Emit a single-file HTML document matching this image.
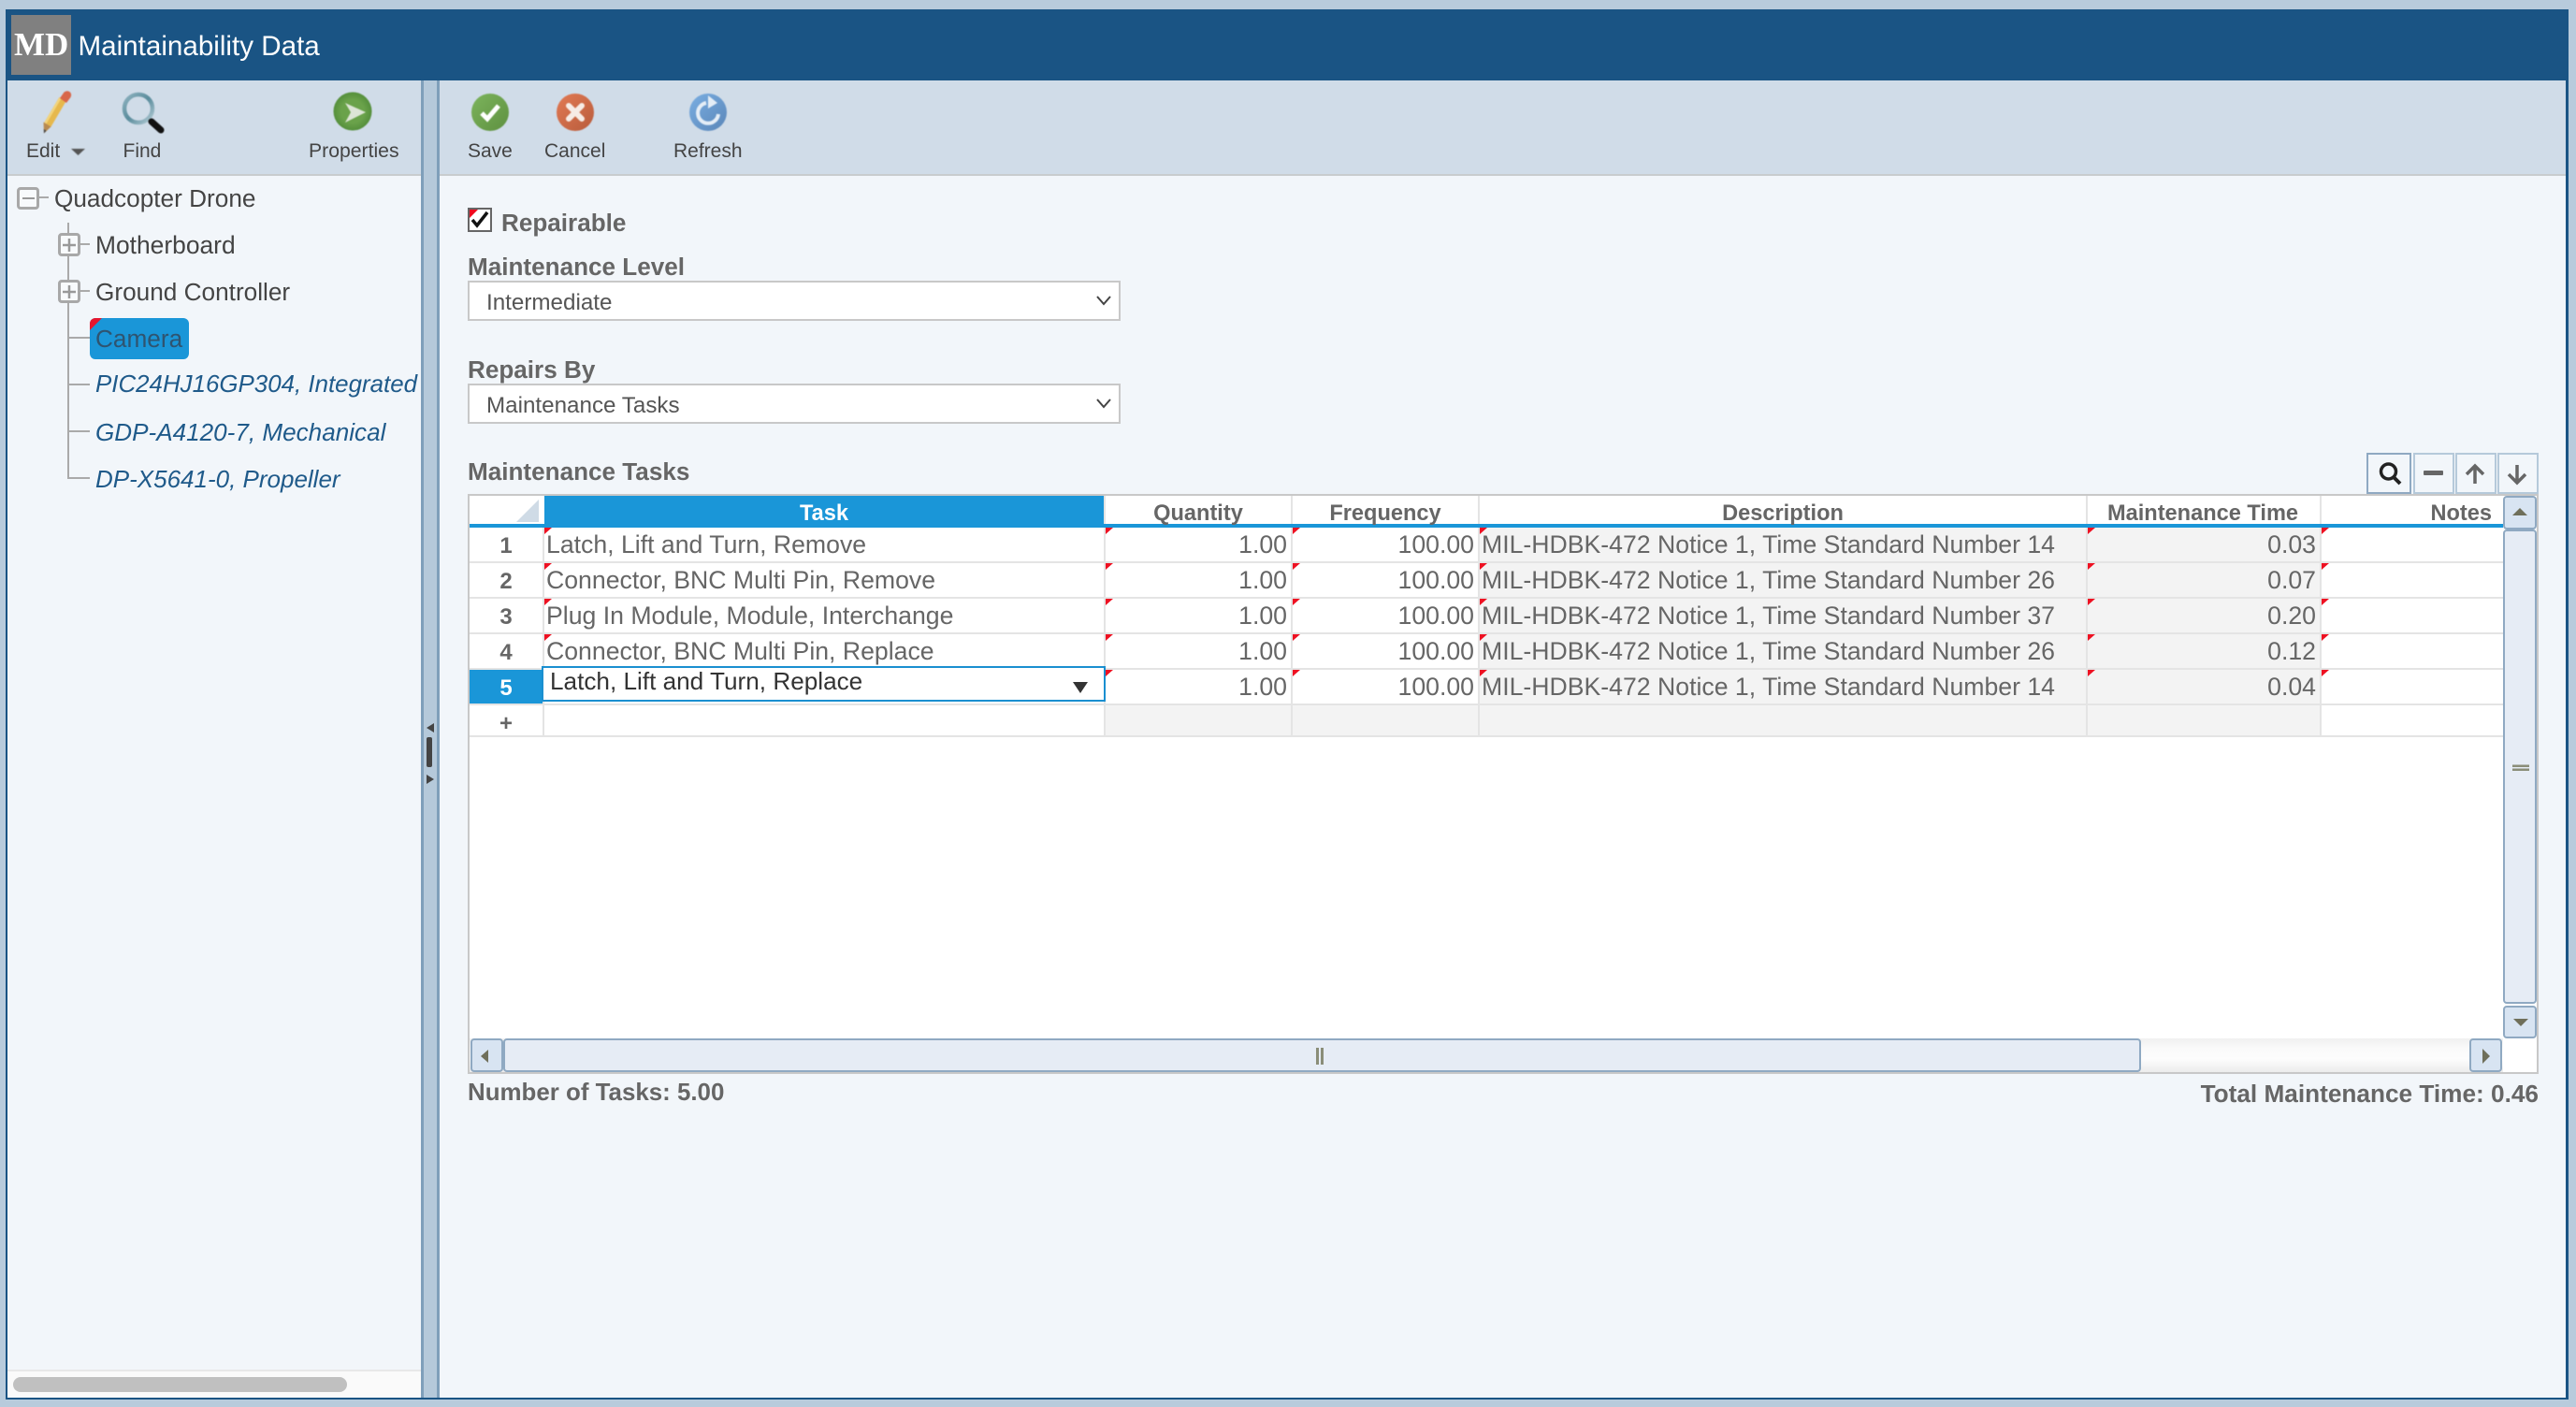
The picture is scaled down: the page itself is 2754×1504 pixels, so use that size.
<!DOCTYPE html>
<html>
<head>
<meta charset="utf-8">
<title>Maintainability Data</title>
<style>
html,body{margin:0;padding:0;background:#b8cbdc;}
#p{position:relative;width:2754px;height:1504px;overflow:hidden;background:#b8cbdc;font-family:"Liberation Sans",Arial,sans-serif;}
#p div,#p svg{position:absolute;}
.t{position:absolute;white-space:nowrap;line-height:1em;top:calc(var(--b)*1px - .8465em);}
.bar{font-size:21px;color:#444;}
.tree{font-size:26.2px;color:#444;}
.it{font-size:26px;font-style:italic;color:#1f5a8a;}
.lb{font-size:26.1px;font-weight:bold;color:#666;}
.sel{font-size:24.2px;color:#555;}
.h{font-size:23.6px;font-weight:bold;color:#666;transform:translateX(-50%);}
.c{font-size:26.65px;color:#666;}
.n{font-size:24px;font-weight:bold;color:#666;transform:translateX(-50%);}
.sb{background:#d8e4f2;border:2px solid #8fa9c2;border-radius:4px;box-sizing:border-box;}
.th{background:#e6ecf5;border:2px solid #8fa9c2;border-radius:4px;box-sizing:border-box;}
.ln{background:#e4e4e4;}
.tb{background:#f2f6fa;border:2px solid #b5c9da;box-sizing:border-box;}
.cl{background:#aaa;}
.bx{background:#f8fafc;border:3px solid #a8a8a8;border-radius:4px;box-sizing:border-box;}
.ic{filter:blur(.6px);}
</style>
</head>
<body>
<div id="p">
  <!-- shell -->
  <div style="left:6px;top:10px;width:2740px;height:1486px;background:#1a5484;"></div>
  <div style="left:8px;top:86px;width:442px;height:1408px;background:#f2f6fa;"></div>
  <div style="left:470px;top:86px;width:2273px;height:1408px;background:#f2f6fa;"></div>
  <div style="left:450px;top:86px;width:20px;height:1408px;background:#b5c9da;border-left:3px solid #7f9fba;border-right:3px solid #7f9fba;box-sizing:border-box;"></div>
  <div style="left:8px;top:86px;width:442px;height:100px;background:#d0dce8;"></div>
  <div style="left:8px;top:186px;width:442px;height:2px;background:#c8ccce;"></div>
  <div style="left:470px;top:86px;width:2273px;height:100px;background:#d0dce8;"></div>
  <div style="left:470px;top:186px;width:2273px;height:2px;background:#c8ccce;"></div>

  <!-- title -->
  <div style="left:12px;top:16px;width:64px;height:64px;background:#808080;"></div>
  <span class="t" style="left:15px;--b:60;font-family:'Liberation Serif',serif;font-weight:bold;font-size:35px;color:#fff;">MD</span>
  <span class="t" style="left:83.500px;--b:60;font-size:29.6px;color:#fff;">Maintainability Data</span>

  <!-- splitter handles -->
  <svg style="left:450px;top:770px;" width="20" height="70" viewBox="450 770 20 70">
    <path d="M464 773v10l-8-5z" fill="#444"/>
    <rect x="456" y="788" width="6" height="32" rx="2" fill="#444"/>
    <path d="M456 828v10l8-5z" fill="#444"/>
  </svg>

  <!-- left toolbar -->
  <svg class="ic" style="left:0;top:86px;" width="450" height="100" viewBox="0 86 450 100">
    <defs>
      <radialGradient id="gp" cx=".5" cy=".5" r=".55"><stop offset=".55" stop-color="#6aa24a"/><stop offset="1" stop-color="#4f8a38"/></radialGradient>
      <linearGradient id="gm" x1="0" y1="0" x2="1" y2="1"><stop offset="0" stop-color="#8fb3c0"/><stop offset=".5" stop-color="#5a8c9c"/><stop offset="1" stop-color="#b4ccd6"/></linearGradient>
    </defs>
    <path d="M50.500 134L67 106" stroke="#e6b84c" stroke-width="8.500" fill="none"/>
    <path d="M48 132.500L64.500 104.500" stroke="#f2d47c" stroke-width="2.500" fill="none"/>
    <path d="M46.500 130.500L54.500 135.500L47 142.500Z" fill="#b88a50"/>
    <path d="M46.800 138L49.500 139.800L47 142.500Z" fill="#444"/>
    <path d="M64 105L68.500 98.500Q72 96 75 98.500Q77 101 75.500 104L71 110Z" fill="#d8664a"/>
    <circle cx="148" cy="116" r="15" fill="none" stroke="url(#gm)" stroke-width="4.500"/>
    <path d="M162 130L172 139" stroke="#111" stroke-width="7" stroke-linecap="round"/>
    <circle cx="377" cy="119" r="20.500" fill="url(#gp)"/>
    <path d="M369 110L391 120L369 131L375 120Z" fill="#dde5d6"/>
    <path d="M76 159H91L83.500 166Z" fill="#555"/>
  </svg>
  <span class="t bar" style="left:28px;--b:169;">Edit</span>
  <span class="t bar" style="left:131.500px;--b:169;">Find</span>
  <span class="t bar" style="left:330px;--b:169;font-size:21.2px;">Properties</span>

  <!-- right toolbar -->
  <svg class="ic" style="left:470px;top:86px;" width="320" height="70" viewBox="470 86 320 70">
    <defs>
      <linearGradient id="gs" x1="0" y1="0" x2="1" y2="1"><stop offset="0" stop-color="#7cb45c"/><stop offset="1" stop-color="#5e9040"/></linearGradient>
      <linearGradient id="gc" x1="0" y1="0" x2="1" y2="1"><stop offset="0" stop-color="#e27a54"/><stop offset="1" stop-color="#b85c3c"/></linearGradient>
      <linearGradient id="gr" x1="0" y1="0" x2="1" y2="1"><stop offset="0" stop-color="#7aaee2"/><stop offset="1" stop-color="#5a86b8"/></linearGradient>
    </defs>
    <circle cx="524" cy="120" r="20" fill="url(#gs)"/>
    <path d="M515 121L521 127L533 113" fill="none" stroke="#fff" stroke-width="5"/>
    <circle cx="615" cy="120" r="20" fill="url(#gc)"/>
    <path d="M608 113L622 127M622 113L608 127" fill="none" stroke="#f6ece6" stroke-width="6" stroke-linecap="round"/>
    <circle cx="757" cy="120" r="20" fill="url(#gr)"/>
    <path d="M755 110A11 11 0 1 0 768 122" fill="none" stroke="#e4edf6" stroke-width="4"/>
    <path d="M757 102L767 110L757 116Z" fill="#e4edf6"/>
  </svg>
  <span class="t bar" style="left:500px;--b:169;">Save</span>
  <span class="t bar" style="left:582px;--b:169;">Cancel</span>
  <span class="t bar" style="left:720px;--b:169;">Refresh</span>

  <!-- tree -->
  <div class="cl" style="left:72px;top:238px;width:2px;height:274px;"></div>
  <div class="cl" style="left:42px;top:210px;width:10px;height:2px;"></div>
  <div class="cl" style="left:86px;top:260px;width:10px;height:2px;"></div>
  <div class="cl" style="left:86px;top:310px;width:10px;height:2px;"></div>
  <div class="cl" style="left:74px;top:360px;width:22px;height:2px;"></div>
  <div class="cl" style="left:74px;top:410px;width:22px;height:2px;"></div>
  <div class="cl" style="left:74px;top:460px;width:22px;height:2px;"></div>
  <div class="cl" style="left:74px;top:510px;width:22px;height:2px;"></div>
  <div class="bx" style="left:18px;top:200px;width:24px;height:24px;"></div>
  <div class="bx" style="left:62px;top:249px;width:24px;height:25px;"></div>
  <div class="bx" style="left:62px;top:299px;width:24px;height:25px;"></div>
  <div style="left:24px;top:210.500px;width:13px;height:2.500px;background:#999;"></div>
  <svg style="left:62px;top:249px;" width="24" height="75" viewBox="0 0 24 75"><path d="M5 13H19M12 6V20M5 63H19M12 56V70" stroke="#999" stroke-width="2.500" fill="none"/></svg>
  <span class="t tree" style="left:58px;--b:221;">Quadcopter Drone</span>
  <span class="t tree" style="left:102px;--b:271;font-size:26.4px;">Motherboard</span>
  <span class="t tree" style="left:102px;--b:321;">Ground Controller</span>
  <div style="left:96px;top:340px;width:106px;height:44px;background:#1a96d8;border-radius:6px;overflow:hidden;">
    <svg style="left:0;top:0;" width="13" height="13"><path d="M0 0H13L0 13Z" fill="#e6162e"/></svg>
  </div>
  <span class="t tree" style="left:102px;--b:371;color:#2f5470;">Camera</span>
  <span class="t it" style="left:102px;--b:421;font-size:25.9px;">PIC24HJ16GP304, Integrated</span>
  <span class="t it" style="left:102px;--b:471;font-size:26.1px;">GDP-A4120-7, Mechanical</span>
  <span class="t it" style="left:102px;--b:521;">DP-X5641-0, Propeller</span>

  <!-- tree h scroll -->
  <div style="left:8px;top:1464px;width:442px;height:30px;background:#fafafa;border-top:2px solid #e8e8e8;box-sizing:border-box;"></div>
  <div style="left:14px;top:1472px;width:357px;height:16px;background:#c0c0c0;border-radius:8px;"></div>

  <!-- form -->
  <div style="left:500px;top:222px;width:26px;height:26px;background:#fff;border:2px solid #666;box-sizing:border-box;"></div>
  <svg style="left:500px;top:222px;" width="26" height="26" viewBox="0 0 26 26">
    <path d="M2 2H11L2 11Z" fill="#f00a1e"/>
    <path d="M5 13L10 19L21 5" fill="none" stroke="#111" stroke-width="3.500"/>
  </svg>
  <span class="t lb" style="left:536px;--b:247;">Repairable</span>
  <span class="t lb" style="left:500px;--b:294;">Maintenance Level</span>
  <div style="left:500px;top:300px;width:698px;height:43px;background:#fff;border:2px solid #c8c8c8;box-sizing:border-box;"></div>
  <span class="t sel" style="left:520px;--b:332;">Intermediate</span>
  <svg style="left:1170px;top:314px;" width="20" height="14"><path d="M3 3L10 11L17 3" fill="none" stroke="#444" stroke-width="2"/></svg>

  <span class="t lb" style="left:500px;--b:404;">Repairs By</span>
  <div style="left:500px;top:410px;width:698px;height:43px;background:#fff;border:2px solid #c8c8c8;box-sizing:border-box;"></div>
  <span class="t sel" style="left:520px;--b:442;">Maintenance Tasks</span>
  <svg style="left:1170px;top:424px;" width="20" height="14"><path d="M3 3L10 11L17 3" fill="none" stroke="#444" stroke-width="2"/></svg>

  <span class="t lb" style="left:500px;--b:513;">Maintenance Tasks</span>

  <!-- grid buttons -->
  <div class="tb" style="left:2530px;top:484px;width:48px;height:44px;border:2.500px solid #8fa9c2;"></div>
  <div class="tb" style="left:2580px;top:484px;width:44px;height:44px;"></div>
  <div class="tb" style="left:2625px;top:484px;width:44px;height:44px;"></div>
  <div class="tb" style="left:2670px;top:484px;width:44px;height:44px;"></div>
  <svg style="left:2530px;top:484px;" width="184" height="44" viewBox="2530 484 184 44">
    <circle cx="2553.500" cy="504" r="8" fill="none" stroke="#222" stroke-width="3.500"/>
    <path d="M2559 510L2566 517" stroke="#222" stroke-width="4"/>
    <rect x="2591" y="503" width="21" height="5" rx="1" fill="#666"/>
    <path d="M2646 517V499M2637 507L2646 498L2655 507" fill="none" stroke="#666" stroke-width="3.500"/>
    <path d="M2691 497V515M2682 507L2691 516L2700 507" fill="none" stroke="#666" stroke-width="3.500"/>
  </svg>

  <!-- grid -->
  <div style="left:500px;top:528px;width:2214px;height:620px;background:#fff;border:2px solid #c8c8c8;box-sizing:border-box;"></div>
  <div style="left:582px;top:530px;width:598px;height:34px;background:#1a96d8;"></div>
  <div style="left:502px;top:560px;width:2174px;height:4px;background:#1a96d8;"></div>
  <svg style="left:550px;top:532px;" width="28" height="28"><path d="M2 26L26 2V26Z" fill="#cfdbe6"/></svg>
  <div style="left:1581px;top:564px;width:900px;height:222px;background:#f3f3f3;"></div>
  <div style="left:1180px;top:754px;width:401px;height:32px;background:#f3f3f3;"></div>

  <div class="ln" style="left:502px;top:600px;width:2174px;height:2px;"></div>
  <div class="ln" style="left:502px;top:638px;width:2174px;height:2px;"></div>
  <div class="ln" style="left:502px;top:676px;width:2174px;height:2px;"></div>
  <div class="ln" style="left:502px;top:714px;width:2174px;height:2px;"></div>
  <div class="ln" style="left:502px;top:752px;width:2174px;height:2px;"></div>
  <div class="ln" style="left:502px;top:786px;width:2174px;height:2px;"></div>
  <div class="ln" style="left:580px;top:564px;width:2px;height:224px;"></div>
  <div class="ln" style="left:1180px;top:530px;width:2px;height:30px;"></div>
  <div class="ln" style="left:1180px;top:564px;width:2px;height:224px;"></div>
  <div class="ln" style="left:1380px;top:530px;width:2px;height:30px;"></div>
  <div class="ln" style="left:1380px;top:564px;width:2px;height:224px;"></div>
  <div class="ln" style="left:1580px;top:530px;width:2px;height:30px;"></div>
  <div class="ln" style="left:1580px;top:564px;width:2px;height:224px;"></div>
  <div class="ln" style="left:2230px;top:530px;width:2px;height:30px;"></div>
  <div class="ln" style="left:2230px;top:564px;width:2px;height:224px;"></div>
  <div class="ln" style="left:2480px;top:530px;width:2px;height:30px;"></div>
  <div class="ln" style="left:2480px;top:564px;width:2px;height:224px;"></div>

  <!-- header text -->
  <span class="t h" style="left:881px;--b:558;color:#fff;">Task</span>
  <span class="t h" style="left:1281px;--b:558;">Quantity</span>
  <span class="t h" style="left:1481px;--b:558;">Frequency</span>
  <span class="t h" style="left:1906px;--b:558;">Description</span>
  <span class="t h" style="left:2355px;--b:558;">Maintenance Time</span>
  <span class="t h" style="right:90px;--b:558;transform:none;">Notes</span>

  <!-- row 5 header + editor -->
  <div style="left:502px;top:716px;width:78px;height:36px;background:#1a96d8;"></div>
  <div style="left:579px;top:712px;width:603px;height:38px;background:#fff;border:2px solid #1a8fd0;box-sizing:border-box;"></div>
  <svg style="left:1146px;top:728px;" width="18" height="14"><path d="M1 1H17L9 13Z" fill="#333"/></svg>

  <!-- row numbers -->
  <span class="t n" style="left:541px;--b:592;">1</span>
  <span class="t n" style="left:541px;--b:630;">2</span>
  <span class="t n" style="left:541px;--b:668;">3</span>
  <span class="t n" style="left:541px;--b:706;">4</span>
  <span class="t n" style="left:541px;--b:744;color:#fff;">5</span>
  <span class="t n" style="left:541px;--b:782;">+</span>

  <!-- row 1 -->
  <span class="t c" style="left:584px;--b:592;">Latch, Lift and Turn, Remove</span>
  <span class="t c" style="right:1378px;--b:592;">1.00</span>
  <span class="t c" style="right:1178px;--b:592;">100.00</span>
  <span class="t c" style="left:1584px;--b:592;">MIL-HDBK-472 Notice 1, Time Standard Number 14</span>
  <span class="t c" style="right:278px;--b:592;">0.03</span>
  <!-- row 2 -->
  <span class="t c" style="left:584px;--b:630;">Connector, BNC Multi Pin, Remove</span>
  <span class="t c" style="right:1378px;--b:630;">1.00</span>
  <span class="t c" style="right:1178px;--b:630;">100.00</span>
  <span class="t c" style="left:1584px;--b:630;">MIL-HDBK-472 Notice 1, Time Standard Number 26</span>
  <span class="t c" style="right:278px;--b:630;">0.07</span>
  <!-- row 3 -->
  <span class="t c" style="left:584px;--b:668;">Plug In Module, Module, Interchange</span>
  <span class="t c" style="right:1378px;--b:668;">1.00</span>
  <span class="t c" style="right:1178px;--b:668;">100.00</span>
  <span class="t c" style="left:1584px;--b:668;">MIL-HDBK-472 Notice 1, Time Standard Number 37</span>
  <span class="t c" style="right:278px;--b:668;">0.20</span>
  <!-- row 4 -->
  <span class="t c" style="left:584px;--b:706;">Connector, BNC Multi Pin, Replace</span>
  <span class="t c" style="right:1378px;--b:706;">1.00</span>
  <span class="t c" style="right:1178px;--b:706;">100.00</span>
  <span class="t c" style="left:1584px;--b:706;">MIL-HDBK-472 Notice 1, Time Standard Number 26</span>
  <span class="t c" style="right:278px;--b:706;">0.12</span>
  <!-- row 5 -->
  <span class="t c" style="left:588px;--b:737;color:#333;font-size:26.15px;">Latch, Lift and Turn, Replace</span>
  <span class="t c" style="right:1378px;--b:744;">1.00</span>
  <span class="t c" style="right:1178px;--b:744;">100.00</span>
  <span class="t c" style="left:1584px;--b:744;">MIL-HDBK-472 Notice 1, Time Standard Number 14</span>
  <span class="t c" style="right:278px;--b:744;">0.04</span>

  <!-- red corner markers -->
  <svg style="left:0;top:0;" width="2754" height="800" viewBox="0 0 2754 800">
    <path fill="#ee1122" d="M582 564h8l-8 7zM582 602h8l-8 7zM582 640h8l-8 7zM582 678h8l-8 7z
    M1182 564h8l-8 7zM1182 602h8l-8 7zM1182 640h8l-8 7zM1182 678h8l-8 7zM1182 716h8l-8 7z
    M1382 564h8l-8 7zM1382 602h8l-8 7zM1382 640h8l-8 7zM1382 678h8l-8 7zM1382 716h8l-8 7z
    M1582 564h8l-8 7zM1582 602h8l-8 7zM1582 640h8l-8 7zM1582 678h8l-8 7zM1582 716h8l-8 7z
    M2232 564h8l-8 7zM2232 602h8l-8 7zM2232 640h8l-8 7zM2232 678h8l-8 7zM2232 716h8l-8 7z
    M2482 564h8l-8 7zM2482 602h8l-8 7zM2482 640h8l-8 7zM2482 678h8l-8 7zM2482 716h8l-8 7z"/>
  </svg>

  <!-- vertical scrollbar -->
  <div class="sb" style="left:2676px;top:530px;width:36px;height:36px;"></div>
  <div class="th" style="left:2676px;top:566px;width:36px;height:507px;"></div>
  <div class="sb" style="left:2676px;top:1075px;width:36px;height:35px;"></div>
  <svg style="left:2676px;top:530px;" width="36" height="580" viewBox="2676 530 36 580">
    <path d="M2686 551L2694 543L2702 551Z" fill="#6f6f5a"/>
    <rect x="2686" y="817.500" width="18" height="2.500" fill="#8a8d78"/>
    <rect x="2686" y="821.500" width="18" height="2.500" fill="#8a8d78"/>
    <path d="M2687 1089H2703L2695 1097Z" fill="#6f6f5a"/>
  </svg>

  <!-- horizontal scrollbar -->
  <div style="left:502px;top:1110px;width:2174px;height:36px;background:linear-gradient(#f0f0f0,#fafafa 30%,#fdfdfd 60%,#ececec);"></div>
  <div class="sb" style="left:503px;top:1110px;width:35px;height:36px;"></div>
  <div class="th" style="left:538px;top:1110px;width:1751px;height:36px;"></div>
  <div class="sb" style="left:2640px;top:1110px;width:35px;height:36px;"></div>
  <svg style="left:503px;top:1110px;" width="2172" height="36" viewBox="503 1110 2172 36">
    <path d="M522 1122V1136L514 1129Z" fill="#6f6f5a"/>
    <rect x="1407" y="1120" width="3" height="18" fill="#8a8d78"/>
    <rect x="1412" y="1120" width="3" height="18" fill="#8a8d78"/>
    <path d="M2654 1121V1137L2662 1129Z" fill="#6f6f5a"/>
  </svg>

  <!-- footer -->
  <span class="t lb" style="left:500px;--b:1178;font-size:25.9px;">Number of Tasks: 5.00</span>
  <span class="t lb" style="right:40px;--b:1178;font-size:26.2px;">Total Maintenance Time: 0.46</span>
</div>
</body>
</html>
